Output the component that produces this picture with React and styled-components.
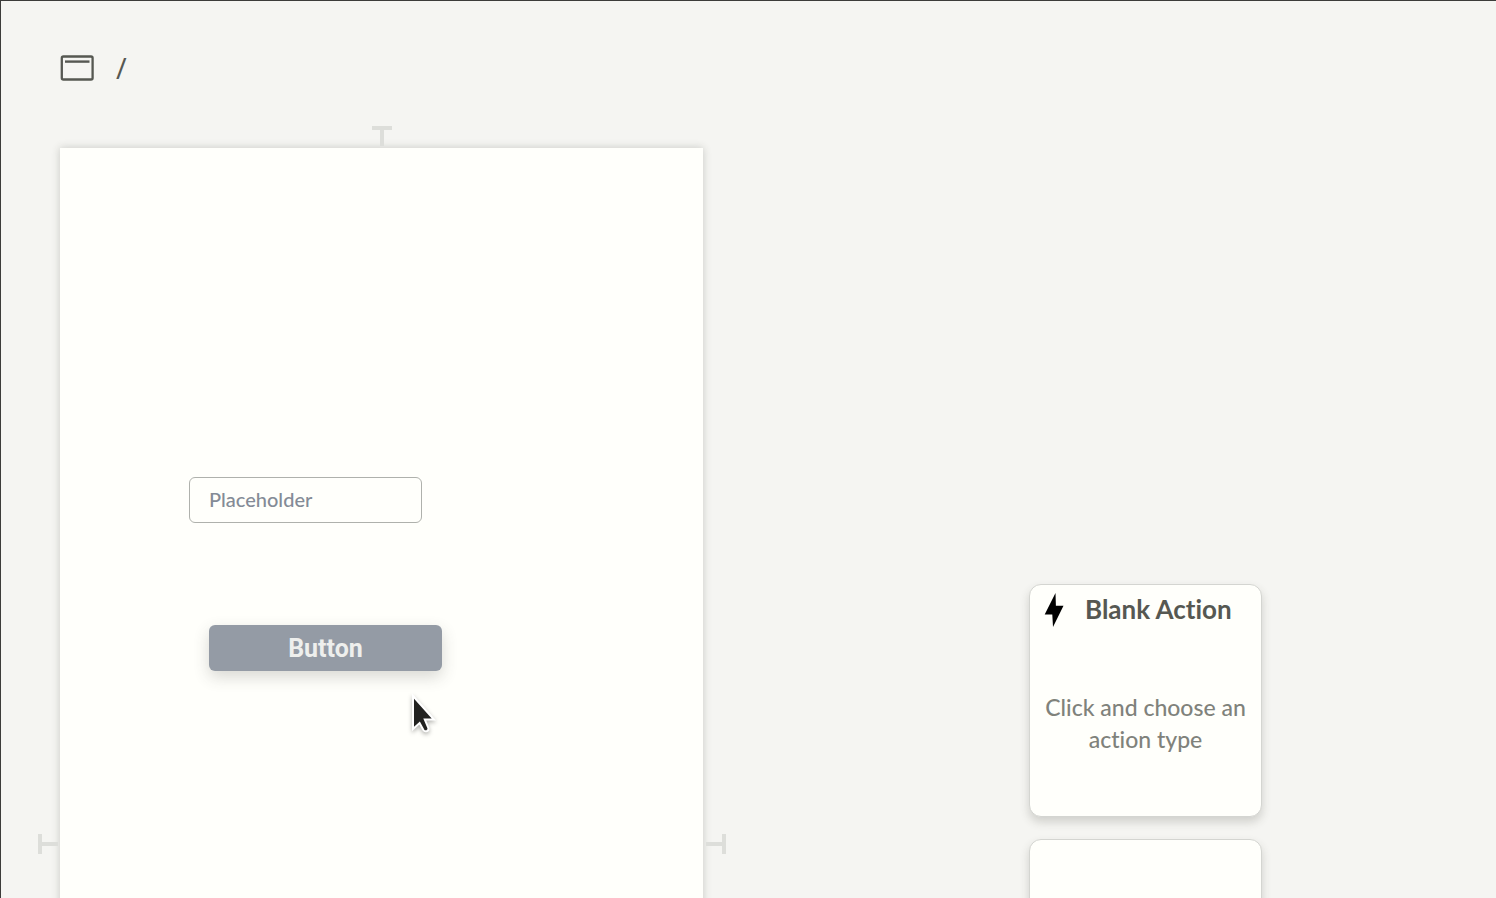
import React from "react";
import styled, { createGlobalStyle } from "styled-components";

const GlobalStyle = createGlobalStyle`
  * { box-sizing: border-box; }
  body {
    margin: 0;
    background: #f5f5f2;
    font-family: Lato, "Open Sans", sans-serif;
    font-weight: 500;
    font-variant-ligatures: none;
    color: #565852;
  }
  button, input { font: inherit; }
`;

const Workspace = styled.div`
  display: flex;
  flex-direction: column;
  height: 100vh;
  overflow: hidden;
  border-top: 1px solid #3c3c3a;
  border-left: 1px solid #3c3c3a;
  padding: 49px 0 0 59px;
`;

const PathBar = styled.header`
  flex: none;
  display: flex;
  align-items: center;
  gap: 22px;
  height: 36px;
  margin-bottom: 62px;
`;

const PathText = styled.span`
  font-family: "Open Sans", sans-serif;
  font-size: 29px;
  line-height: 36px;
`;

const Board = styled.main`
  flex: 1;
  min-height: 0;
  display: flex;
  align-items: flex-start;
`;

const Artboard = styled.section`
  flex: 0 0 auto;
  width: 43vw;
  height: 1392px;
  position: relative;
  background: #fffffb;
  box-shadow: 0 0 8px rgba(60, 62, 52, 0.24);
`;

const Handle = styled.svg`
  position: absolute;
  width: 20px;
  height: 20px;
  fill: #dddeda;
  ${({ $side }) =>
    ({
      top: "left: calc(50% - 10px); top: -22px;",
      left: "left: -22px; top: calc(50% - 10px); transform: rotate(-90deg);",
      right: "right: -23px; top: calc(50% - 10px); transform: rotate(90deg);",
    })[$side]}
`;

const CanvasInput = styled.input`
  position: absolute;
  left: 129px;
  top: 329px;
  width: 233px;
  height: 46px;
  padding: 0 19px 2px;
  border: 1px solid #afb1ac;
  border-radius: 6px;
  background: #fffffb;
  font-size: 20px;
  &::placeholder { color: #848b96; opacity: 1; }
`;

const CanvasButton = styled.button`
  position: absolute;
  left: 149px;
  top: 477px;
  width: 233px;
  height: 46px;
  padding: 2px 0 0;
  border: 0;
  border-radius: 6px;
  background: #949ba5;
  color: #eeefed;
  font-family: Roboto, sans-serif;
  font-size: 25px;
  font-weight: 700;
  line-height: 44px;
  box-shadow: 0 6px 16px rgba(60, 62, 55, 0.2);
`;

const Cursor = styled.svg`
  position: absolute;
  left: 348px;
  top: 540px;
  width: 32px;
  height: 48px;
  filter: drop-shadow(0 2px 2px rgba(0, 0, 0, 0.3));
`;

const ActionList = styled.aside`
  flex: none;
  display: flex;
  flex-direction: column;
  gap: 22px;
  width: 233px;
  margin: 436px 234px 0 auto;
`;

const ActionCard = styled.article`
  height: 233px;
  padding: 8px 14px;
  border: 1px solid #d4d5d1;
  border-radius: 12px;
  background: #fffffb;
  box-shadow: 0 5px 10px rgba(60, 62, 52, 0.2);
`;

const CardHeader = styled.header`
  display: flex;
  align-items: flex-start;
  height: 34px;
  gap: 21px;
`;

const CardTitle = styled.h2`
  margin: 0;
  font-size: 26px;
  line-height: 32px;
  font-weight: 700;
  white-space: nowrap;
`;

const CardText = styled.p`
  margin: 64px 0 0;
  font-size: 23px;
  line-height: 32px;
  text-align: center;
  color: #80827b;
`;

export default function App() {
  return (
    <Workspace>
      <GlobalStyle />
      <PathBar>
        <svg width="34" height="26" viewBox="0 0 34 26" fill="none" stroke="#565852" aria-hidden="true">
          <rect x="1.8" y="1.5" width="30.8" height="23" rx="1.6" strokeWidth="2.3" />
          <path d="M5 6.6h24.5" strokeWidth="2.4" />
        </svg>
        <PathText>/</PathText>
      </PathBar>
      <Board>
        <Artboard aria-label="Page">
          {["top", "left", "right"].map((side) => (
            <Handle key={side} $side={side} viewBox="0 0 20 20" aria-hidden="true">
              <path d="M0 0h20v4h-8v16h-4V4H0z" />
            </Handle>
          ))}
          <CanvasInput type="text" placeholder="Placeholder" aria-label="Placeholder" />
          <CanvasButton type="button">Button</CanvasButton>
          <Cursor viewBox="0 0 32 48" aria-hidden="true">
            <path
              d="M5 8v33l6.6-6 3.8 7q1.3 2 3.6 1 2.2-1.1 1.3-3.2l-3.5-8.2h9.2z"
              fill="#222220"
              stroke="#fff"
              strokeWidth="2"
            />
          </Cursor>
        </Artboard>
        <ActionList>
          <ActionCard>
            <CardHeader>
              <svg width="20" height="34" viewBox="0 0 20 34" aria-hidden="true">
                <path d="M11.5 0 .7 21.5h7.6L9 34 19.5 12.7h-7.6z" fill="#000" />
              </svg>
              <CardTitle>Blank Action</CardTitle>
            </CardHeader>
            <CardText>Click and choose an action type</CardText>
          </ActionCard>
          <ActionCard />
        </ActionList>
      </Board>
    </Workspace>
  );
}
